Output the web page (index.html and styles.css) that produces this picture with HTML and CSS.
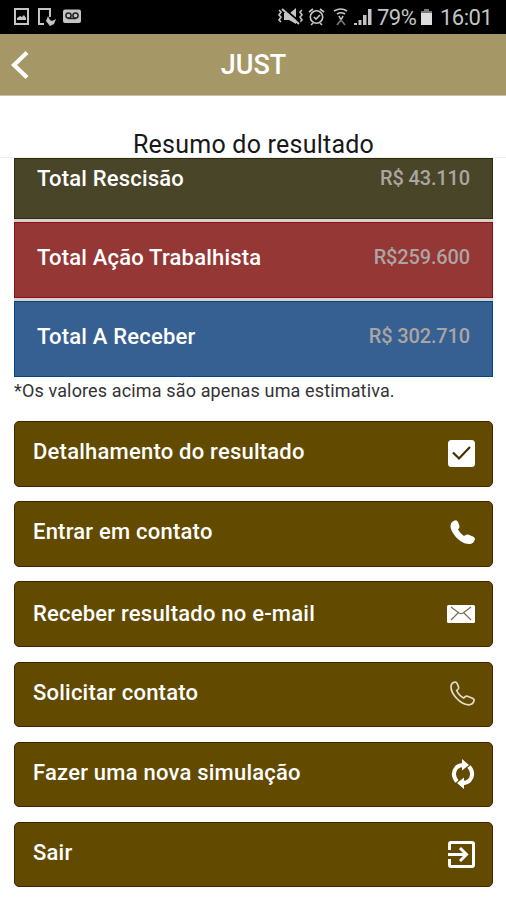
FILE: index.html
```html
<!DOCTYPE html>
<html lang="pt-BR">
<head>
<meta charset="utf-8">
<title>JUST</title>
<link rel="stylesheet" href="styles.css">
</head>
<body>
<div class="status">
  <svg class="status-left" viewBox="0 0 70 20" width="70" height="20" fill="none" stroke="#c4c4c4" stroke-width="2">
    <rect x="1" y="2" width="13" height="15"/><path d="M3 13v-2l3-2 2 1 2-2 2 3v2z" fill="#c4c4c4" stroke="none"/>
    <path d="M30 17h-5V2h11v8"/><path d="M34 9l-2 5 4 5 4-2 2-5-4 2-2-1z" fill="#c4c4c4" stroke="none"/>
    <rect x="49" y="2.500" width="18" height="13.500" rx="2" fill="#c4c4c4" stroke="none"/><g stroke="#222" stroke-width="1.500"><circle cx="54.500" cy="8.500" r="2.600"/><circle cx="61.500" cy="8.500" r="2.600"/><path d="M54 11.500h8"/></g>
  </svg>
  <svg class="status-right" viewBox="0 0 98 22" width="98" height="22" fill="none" stroke="#c4c4c4" stroke-width="1.600">
    <path d="M2 3l2 2-2 3 2 2-2 3 2 2M25 3l-2 2 2 3-2 2 2 3-2 2"/><path d="M7 6h6l6-5v16l-7-4H7z" fill="#c4c4c4" stroke="none"/><path d="M6 1l17 14" stroke="#000" stroke-width="2"/><path d="M5 2l17 15" stroke-width="2"/>
    <circle cx="39.500" cy="10" r="6.200"/><path d="M32 5l4-3M47 5l-4-3M34 18l2-2M45 18l-2-2M37 10l2 2 4-4"/>
    <g transform="translate(1)"><path d="M56 4q7-4 13 0M59 7q4-2.500 8 0M61 9l2 4 2-4"/><path d="M59 18l4-5 4 5" stroke="#777"/></g>
    <path d="M77 18v-2h3v2zM81.500 18v-5h3v5zM86 18V8h3.500v10zM91 18V2h3.500v16z" fill="#c4c4c4" stroke="none"/>
  </svg>
  <span class="pct">79%</span>
  <svg class="battery" viewBox="0 0 13 18" width="13" height="18"><path d="M4 1h5v2h3v4H1V3h3z" fill="#777"/><path d="M1 5h11v12H1z" fill="#ddd"/></svg>
  <span class="time">16:01</span>
</div>
<header class="bar">
  <svg class="back" viewBox="0 0 20 30" width="20" height="30" fill="none" stroke="#fff" stroke-width="4.200"><path d="M17 2.500L4 15l13 12.500"/></svg>
  <h1 class="title"><span>JUST</span></h1>
</header>
<section class="heading"><h2><span>Resumo do resultado</span></h2></section>
<main class="content">
  <div class="totals">
    <div class="total olive"><span>Total Rescisão</span><span class="value">R$ 43.110</span></div>
    <div class="total red"><span>Total Ação Trabalhista</span><span class="value">R$259.600</span></div>
    <div class="total blue"><span>Total A Receber</span><span class="value">R$ 302.710</span></div>
  </div>
  <p class="note"><span>*Os valores acima são apenas uma estimativa.</span></p>
  <nav class="actions">
    <button class="action"><span>Detalhamento do resultado</span>
      <svg viewBox="0 0 30 30"><rect x="2" y="2" width="27" height="27" rx="3.500" fill="#fff"/><path d="M7 14.500l6 6L24 9" fill="none" stroke="#472d00" stroke-width="2.200"/></svg></button>
    <button class="action"><span>Entrar em contato</span>
      <svg viewBox="0 0 30 30"><path d="M6 4l2.500-1.500q2.500-.8 3.500 1.500l1.500 4q.3 2-1.500 3.500 2 4 6 6.500 2-2 4-1.500l5 2q2 1 2 2.500-1 5-6 5C14 26 4.500 14.500 4.500 8q0-2.500 1.500-4z" fill="#fff"/></svg></button>
    <button class="action mail"><span>Receber resultado no e-mail</span>
      <svg viewBox="0 0 30 30"><rect x="1" y="7" width="28" height="18" rx="1.500" fill="#fff"/><path d="M5 9l8 6q2 1.300 4 0l8-6M5 22l7-7M25 22l-7-7" fill="none" stroke="#806b50" stroke-width="1.200"/></svg></button>
    <button class="action"><span>Solicitar contato</span>
      <svg viewBox="0 0 30 30"><path d="M6 4.500l2-1.200q2.300-.8 3.200 1.200l1.500 4q.3 1.500-2 3 2 5 7 7.500 2-2.200 3.800-1.700l5 2q2 1 1.500 2.500-1 4-5.500 4C14 25.500 5 14.500 5 8q0-2 1-3.500z" fill="none" stroke="#e4dccb" stroke-width="1.700"/></svg></button>
    <button class="action"><span>Fazer uma nova simulação</span>
      <svg viewBox="0 0 30 30" fill="none" stroke="#fff" stroke-width="4"><g transform="translate(1 -.5)"><path d="M10 23Q4 15.500 9.500 9q2.500-2.500 7.500-2.500M22 8q6 7.500.5 14-2.500 2.500-7.500 2.500"/><path d="M15 .5l7 6-7 5.500zM17 19l-7 5.500 7 6z" fill="#fff" stroke="none"/></g></svg></button>
    <button class="action"><span>Sair</span>
      <svg viewBox="0 0 30 30" fill="none" stroke="#fff" stroke-width="3"><path d="M3.500 11V5q0-1.500 1.500-1.500h21q1.500 0 1.500 1.500v21q0 1.500-1.500 1.500H5q-1.500 0-1.500-1.500v-6"/><path d="M2 15.500h17M14 9l6.500 6.500L14 22"/></svg></button>
  </nav>
</main>
</body>
</html>
```
FILE: styles.css
```css
* { box-sizing: border-box; }
body { margin: 0; height: 900px; overflow: hidden; background: #fff; font-family: Roboto, sans-serif; }
h1, h2, p { margin: 0; }
span { white-space: nowrap; }
.status { height: 34px; background: #000; color: #c4c4c4; display: flex; align-items: flex-start; padding: 7px 14px 0; }
.status svg { flex: none; }
.status-left { margin-right: 193px; }
.status-right { margin-left: 0; }
.status span { font-size: 22px; line-height: 22px; }
.status .pct { flex: none; margin-left: 2px; width: 40px; letter-spacing: -.5px; }
.status .time { letter-spacing: -.5px; }
.battery { margin: 1px 7px 0 3px; }
.bar { height: 62px; background: #a69766; border-bottom: 1px solid #c9c0a1; display: flex; align-items: center; padding-left: 10px; }
.back { flex: none; }
.title { flex: 1; padding-right: 29px; text-align: center; color: #fff; font-size: 27px; line-height: 32px; font-weight: 500; }
.heading { height: 62px; padding: 33px 0 0 1px; border-bottom: 1px solid #eee; text-align: center; }
.heading h2 { font-size: 25px; line-height: 32px; font-weight: 400; letter-spacing: .23px; color: #181818; }
.content { padding: 0 13px 0 14px; }
.totals { display: grid; grid-template-rows: 61px 76px 76px; gap: 3px; background: #d9d0d0; }
.total { display: flex; justify-content: space-between; padding: 22px 22px 0 22px; border: 1px solid; font-size: 22px; line-height: 26px; font-weight: 500; letter-spacing: .19px; color: #fff; }
.total .value { font-size: 20px; line-height: 25px; letter-spacing: -.15px; color: #aaa5a2; }
.olive { padding-top: 7px; background: #494528; border-color: #302c13; }
.red { background: #953735; border-color: #8b1014; }
.blue { background: #376092; border-color: #064687; }
.note { height: 44px; padding-top: 3px; font-size: 18px; line-height: 22px; letter-spacing: .14px; color: #333; }
.actions { display: grid; grid-auto-rows: 65.500px; gap: 14.700px; }
.action { display: flex; justify-content: space-between; align-items: flex-start; padding: 17px 16px 0 18px; border: 1px solid #482200; border-radius: 5px; background: #624a00; color: #fff; font: 500 22px/26px Roboto, sans-serif; letter-spacing: .22px; text-align: left; }
.action svg { width: 30px; height: 30px; flex: none; margin-top: -1px; }
.mail span { padding-top: 2px; }
```
